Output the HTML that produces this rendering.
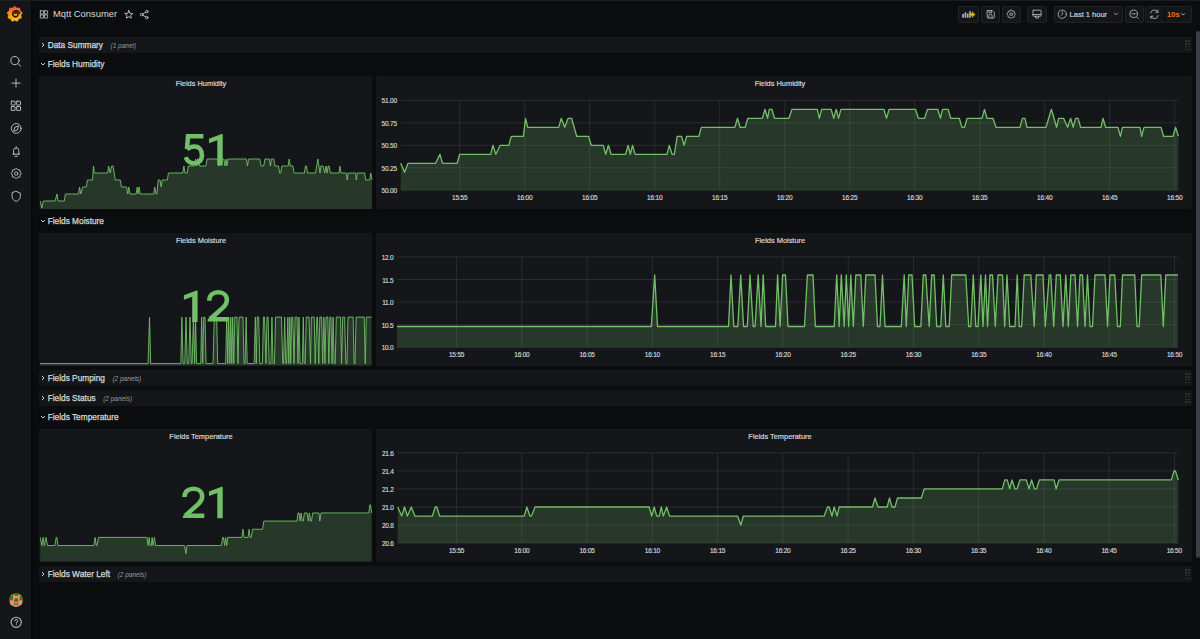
<!DOCTYPE html>
<html><head><meta charset="utf-8">
<style>
*{margin:0;padding:0;box-sizing:border-box}
html,body{width:1200px;height:639px;overflow:hidden;background:#0b0c0e;font-family:"Liberation Sans",sans-serif;position:relative}
.side{position:absolute;left:0;top:0;width:31.4px;height:639px;background:#141619}
.panel{position:absolute;background:#141619;border-radius:1.5px}
.rowbg{position:absolute;left:39px;width:1152.8px;height:16px;background:#141619;border-radius:1.5px}
.rtitle{position:absolute;left:47.7px;height:15.45px;line-height:15.45px;font-size:8.3px;font-weight:normal;-webkit-text-stroke:0.25px #d8d9da;color:#d8d9da;white-space:nowrap}
.rtitle .sub{font-size:6.5px;font-weight:normal;font-style:italic;color:#9a9ba0;margin-left:7.5px;-webkit-text-stroke:0}
.chev{position:absolute;left:39.9px}
.dot{position:absolute;width:1.5px;height:1.5px;background:#303236}
.drag{position:absolute;left:1185.5px;width:4.5px;height:9px;background-image:radial-gradient(circle,#3a3c40 0.8px,transparent 0.9px);background-size:2.8px 2.8px}
.ptitle{position:absolute;width:120px;text-align:center;font-size:8.1px;transform:scaleX(0.915);font-weight:normal;-webkit-text-stroke:0.2px #d8d9da;color:#d8d9da;line-height:9px;white-space:nowrap}
.yl{position:absolute;text-align:right;font-size:6.5px;letter-spacing:-0.2px;color:#d8d9da;-webkit-text-stroke:0.15px #d8d9da;line-height:9px;white-space:nowrap}
.xl{position:absolute;width:30px;text-align:center;font-size:6.5px;letter-spacing:-0.2px;color:#d8d9da;-webkit-text-stroke:0.15px #d8d9da;line-height:9px;white-space:nowrap}
.big{position:absolute;font-size:44px;color:#73bf69;font-weight:normal;-webkit-text-stroke:1.2px #73bf69;line-height:44px;white-space:nowrap}
svg.ov{position:absolute;left:0;top:0}
.btn{position:absolute;top:6px;height:16.8px;background:#141619;border:0.6px solid #202226;border-radius:2px}
</style></head><body>
<div class="side"></div><div style="position:absolute;left:31.4px;top:0;width:3px;height:639px;background:linear-gradient(90deg,#060708,rgba(11,12,14,0))"></div>
<div class="rowbg" style="top:36.8px"></div>
<div class="dot" style="left:1185.4px;top:40.2px"></div>
<div class="dot" style="left:1185.4px;top:43.0px"></div>
<div class="dot" style="left:1185.4px;top:45.7px"></div>
<div class="dot" style="left:1185.4px;top:48.5px"></div>
<div class="dot" style="left:1188.2px;top:40.2px"></div>
<div class="dot" style="left:1188.2px;top:43.0px"></div>
<div class="dot" style="left:1188.2px;top:45.7px"></div>
<div class="dot" style="left:1188.2px;top:48.5px"></div>
<svg class="chev" style="top:40.7px" width="6" height="8" viewBox="0 0 6 8"><path d="M2 2 L4 4 L2 6" fill="none" stroke="#c7d0d9" stroke-width="1"/></svg>
<div class="rtitle" style="top:37.7px">Data Summary<span class="sub">(1 panel)</span></div>
<svg class="chev" style="top:60.3px" width="6" height="8" viewBox="0 0 6 8"><path d="M1 3 L3 5 L5 3" fill="none" stroke="#c7d0d9" stroke-width="1"/></svg>
<div class="rtitle" style="top:57.3px">Fields Humidity</div>
<svg class="chev" style="top:217.1px" width="6" height="8" viewBox="0 0 6 8"><path d="M1 3 L3 5 L5 3" fill="none" stroke="#c7d0d9" stroke-width="1"/></svg>
<div class="rtitle" style="top:214.1px">Fields Moisture</div>
<div class="rowbg" style="top:370.0px"></div>
<div class="dot" style="left:1185.4px;top:373.4px"></div>
<div class="dot" style="left:1185.4px;top:376.2px"></div>
<div class="dot" style="left:1185.4px;top:378.9px"></div>
<div class="dot" style="left:1185.4px;top:381.7px"></div>
<div class="dot" style="left:1188.2px;top:373.4px"></div>
<div class="dot" style="left:1188.2px;top:376.2px"></div>
<div class="dot" style="left:1188.2px;top:378.9px"></div>
<div class="dot" style="left:1188.2px;top:381.7px"></div>
<svg class="chev" style="top:373.9px" width="6" height="8" viewBox="0 0 6 8"><path d="M2 2 L4 4 L2 6" fill="none" stroke="#c7d0d9" stroke-width="1"/></svg>
<div class="rtitle" style="top:370.9px">Fields Pumping<span class="sub">(2 panels)</span></div>
<div class="rowbg" style="top:389.6px"></div>
<div class="dot" style="left:1185.4px;top:393.0px"></div>
<div class="dot" style="left:1185.4px;top:395.8px"></div>
<div class="dot" style="left:1185.4px;top:398.5px"></div>
<div class="dot" style="left:1185.4px;top:401.2px"></div>
<div class="dot" style="left:1188.2px;top:393.0px"></div>
<div class="dot" style="left:1188.2px;top:395.8px"></div>
<div class="dot" style="left:1188.2px;top:398.5px"></div>
<div class="dot" style="left:1188.2px;top:401.2px"></div>
<svg class="chev" style="top:393.5px" width="6" height="8" viewBox="0 0 6 8"><path d="M2 2 L4 4 L2 6" fill="none" stroke="#c7d0d9" stroke-width="1"/></svg>
<div class="rtitle" style="top:390.5px">Fields Status<span class="sub">(2 panels)</span></div>
<svg class="chev" style="top:413.1px" width="6" height="8" viewBox="0 0 6 8"><path d="M1 3 L3 5 L5 3" fill="none" stroke="#c7d0d9" stroke-width="1"/></svg>
<div class="rtitle" style="top:410.1px">Fields Temperature</div>
<div class="rowbg" style="top:566.0px"></div>
<div class="dot" style="left:1185.4px;top:569.4px"></div>
<div class="dot" style="left:1185.4px;top:572.2px"></div>
<div class="dot" style="left:1185.4px;top:574.9px"></div>
<div class="dot" style="left:1185.4px;top:577.7px"></div>
<div class="dot" style="left:1188.2px;top:569.4px"></div>
<div class="dot" style="left:1188.2px;top:572.2px"></div>
<div class="dot" style="left:1188.2px;top:574.9px"></div>
<div class="dot" style="left:1188.2px;top:577.7px"></div>
<svg class="chev" style="top:569.9px" width="6" height="8" viewBox="0 0 6 8"><path d="M2 2 L4 4 L2 6" fill="none" stroke="#c7d0d9" stroke-width="1"/></svg>
<div class="rtitle" style="top:566.9px">Fields Water Left<span class="sub">(2 panels)</span></div>
<div class="panel" style="left:39.0px;top:76.2px;width:333.3px;height:132.8px"></div>
<div class="panel" style="left:376.4px;top:76.2px;width:815.4px;height:132.8px"></div>
<div class="panel" style="left:39.0px;top:233.0px;width:333.3px;height:132.8px"></div>
<div class="panel" style="left:376.4px;top:233.0px;width:815.4px;height:132.8px"></div>
<div class="panel" style="left:39.0px;top:429.0px;width:333.3px;height:132.8px"></div>
<div class="panel" style="left:376.4px;top:429.0px;width:815.4px;height:132.8px"></div>
<div class="yl" style="left:366.9px;width:30.0px;top:186.3px">50.00</div>
<div class="yl" style="left:366.9px;width:30.0px;top:163.8px">50.25</div>
<div class="yl" style="left:366.9px;width:30.0px;top:141.3px">50.50</div>
<div class="yl" style="left:366.9px;width:30.0px;top:118.8px">50.75</div>
<div class="yl" style="left:366.9px;width:30.0px;top:96.3px">51.00</div>
<div class="xl" style="left:444.7px;top:192.9px">15:55</div>
<div class="xl" style="left:509.7px;top:192.9px">16:00</div>
<div class="xl" style="left:574.7px;top:192.9px">16:05</div>
<div class="xl" style="left:639.7px;top:192.9px">16:10</div>
<div class="xl" style="left:704.7px;top:192.9px">16:15</div>
<div class="xl" style="left:769.7px;top:192.9px">16:20</div>
<div class="xl" style="left:834.7px;top:192.9px">16:25</div>
<div class="xl" style="left:899.7px;top:192.9px">16:30</div>
<div class="xl" style="left:964.7px;top:192.9px">16:35</div>
<div class="xl" style="left:1029.7px;top:192.9px">16:40</div>
<div class="xl" style="left:1094.7px;top:192.9px">16:45</div>
<div class="xl" style="left:1159.7px;top:192.9px">16:50</div>
<div class="yl" style="left:363.5px;width:30.0px;top:343.3px">10.0</div>
<div class="yl" style="left:363.5px;width:30.0px;top:320.7px">10.5</div>
<div class="yl" style="left:363.5px;width:30.0px;top:298.1px">11.0</div>
<div class="yl" style="left:363.5px;width:30.0px;top:275.5px">11.5</div>
<div class="yl" style="left:363.5px;width:30.0px;top:252.9px">12.0</div>
<div class="xl" style="left:441.6px;top:349.9px">15:55</div>
<div class="xl" style="left:506.9px;top:349.9px">16:00</div>
<div class="xl" style="left:572.1px;top:349.9px">16:05</div>
<div class="xl" style="left:637.4px;top:349.9px">16:10</div>
<div class="xl" style="left:702.7px;top:349.9px">16:15</div>
<div class="xl" style="left:768.0px;top:349.9px">16:20</div>
<div class="xl" style="left:833.2px;top:349.9px">16:25</div>
<div class="xl" style="left:898.5px;top:349.9px">16:30</div>
<div class="xl" style="left:963.8px;top:349.9px">16:35</div>
<div class="xl" style="left:1029.0px;top:349.9px">16:40</div>
<div class="xl" style="left:1094.3px;top:349.9px">16:45</div>
<div class="xl" style="left:1159.6px;top:349.9px">16:50</div>
<div class="yl" style="left:363.8px;width:30.0px;top:539.1px">20.6</div>
<div class="yl" style="left:363.8px;width:30.0px;top:521.1px">20.8</div>
<div class="yl" style="left:363.8px;width:30.0px;top:503.0px">21.0</div>
<div class="yl" style="left:363.8px;width:30.0px;top:485.0px">21.2</div>
<div class="yl" style="left:363.8px;width:30.0px;top:466.9px">21.4</div>
<div class="yl" style="left:363.8px;width:30.0px;top:448.9px">21.6</div>
<div class="xl" style="left:441.6px;top:546.0px">15:55</div>
<div class="xl" style="left:506.9px;top:546.0px">16:00</div>
<div class="xl" style="left:572.1px;top:546.0px">16:05</div>
<div class="xl" style="left:637.4px;top:546.0px">16:10</div>
<div class="xl" style="left:702.6px;top:546.0px">16:15</div>
<div class="xl" style="left:767.9px;top:546.0px">16:20</div>
<div class="xl" style="left:833.1px;top:546.0px">16:25</div>
<div class="xl" style="left:898.4px;top:546.0px">16:30</div>
<div class="xl" style="left:963.6px;top:546.0px">16:35</div>
<div class="xl" style="left:1028.8px;top:546.0px">16:40</div>
<div class="xl" style="left:1094.1px;top:546.0px">16:45</div>
<div class="xl" style="left:1159.3px;top:546.0px">16:50</div>
<div class="ptitle" style="left:141.1px;top:79.2px">Fields Humidity</div>
<div class="ptitle" style="left:719.5px;top:79.2px">Fields Humidity</div>
<div class="ptitle" style="left:141.1px;top:236.0px">Fields Moisture</div>
<div class="ptitle" style="left:719.5px;top:236.0px">Fields Moisture</div>
<div class="ptitle" style="left:141.1px;top:432.0px">Fields Temperature</div>
<div class="ptitle" style="left:719.5px;top:432.0px">Fields Temperature</div>
<svg class="ov" width="1200" height="639" viewBox="0 0 1200 639"><line x1="400.7" y1="190.30" x2="1178.4" y2="190.30" stroke="rgba(255,255,255,0.09)" stroke-width="1"/>
<line x1="400.7" y1="167.80" x2="1178.4" y2="167.80" stroke="rgba(255,255,255,0.09)" stroke-width="1"/>
<line x1="400.7" y1="145.30" x2="1178.4" y2="145.30" stroke="rgba(255,255,255,0.09)" stroke-width="1"/>
<line x1="400.7" y1="122.80" x2="1178.4" y2="122.80" stroke="rgba(255,255,255,0.09)" stroke-width="1"/>
<line x1="400.7" y1="100.30" x2="1178.4" y2="100.30" stroke="rgba(255,255,255,0.09)" stroke-width="1"/>
<line x1="459.70" y1="100.3" x2="459.70" y2="190.3" stroke="rgba(255,255,255,0.09)" stroke-width="1"/>
<line x1="524.70" y1="100.3" x2="524.70" y2="190.3" stroke="rgba(255,255,255,0.09)" stroke-width="1"/>
<line x1="589.70" y1="100.3" x2="589.70" y2="190.3" stroke="rgba(255,255,255,0.09)" stroke-width="1"/>
<line x1="654.70" y1="100.3" x2="654.70" y2="190.3" stroke="rgba(255,255,255,0.09)" stroke-width="1"/>
<line x1="719.70" y1="100.3" x2="719.70" y2="190.3" stroke="rgba(255,255,255,0.09)" stroke-width="1"/>
<line x1="784.70" y1="100.3" x2="784.70" y2="190.3" stroke="rgba(255,255,255,0.09)" stroke-width="1"/>
<line x1="849.70" y1="100.3" x2="849.70" y2="190.3" stroke="rgba(255,255,255,0.09)" stroke-width="1"/>
<line x1="914.70" y1="100.3" x2="914.70" y2="190.3" stroke="rgba(255,255,255,0.09)" stroke-width="1"/>
<line x1="979.70" y1="100.3" x2="979.70" y2="190.3" stroke="rgba(255,255,255,0.09)" stroke-width="1"/>
<line x1="1044.70" y1="100.3" x2="1044.70" y2="190.3" stroke="rgba(255,255,255,0.09)" stroke-width="1"/>
<line x1="1109.70" y1="100.3" x2="1109.70" y2="190.3" stroke="rgba(255,255,255,0.09)" stroke-width="1"/>
<line x1="1174.70" y1="100.3" x2="1174.70" y2="190.3" stroke="rgba(255,255,255,0.09)" stroke-width="1"/>
<polygon points="400.70,190.30 400.70,163.30 404.60,172.30 408.00,163.30 435.60,163.30 440.00,154.30 442.50,163.30 457.10,163.30 459.70,154.30 490.70,154.30 492.90,145.30 495.80,154.30 500.20,145.30 508.80,145.30 511.30,136.30 523.40,136.30 525.50,118.30 527.70,127.30 558.70,127.30 561.20,118.30 564.70,127.30 568.10,118.30 571.60,118.30 576.70,136.30 588.60,136.30 591.20,145.30 603.20,145.30 605.80,154.30 608.40,145.30 611.00,154.30 625.60,154.30 628.20,145.30 630.30,154.30 632.50,145.30 635.10,154.30 666.90,154.30 669.20,145.30 672.10,154.30 674.30,154.30 677.20,136.30 681.50,136.30 684.10,145.30 686.70,136.30 698.80,136.30 701.30,127.30 734.90,127.30 737.50,118.30 740.10,127.30 745.20,127.30 747.80,118.30 762.40,118.30 765.00,109.30 767.60,118.30 769.30,109.30 771.90,109.30 774.50,118.30 788.90,118.30 792.00,109.30 817.30,109.30 819.40,118.30 821.60,109.30 831.10,109.30 833.70,118.30 836.30,109.30 838.50,118.30 840.90,109.30 883.90,109.30 886.50,118.30 889.10,109.30 915.40,109.30 918.40,118.30 924.60,118.30 927.50,109.30 937.80,109.30 940.40,118.30 942.60,109.30 948.10,109.30 950.70,118.30 959.30,118.30 961.90,127.30 964.50,127.30 967.10,118.30 982.00,118.30 984.40,109.30 987.00,118.30 993.00,118.30 996.00,127.30 1020.00,127.30 1022.40,118.30 1025.00,118.30 1027.00,127.30 1046.00,127.30 1051.40,109.30 1056.60,127.30 1058.60,118.30 1063.60,118.30 1067.60,127.30 1070.60,118.30 1073.20,127.30 1075.60,118.30 1078.00,118.30 1080.60,127.30 1101.00,127.30 1103.00,118.30 1105.60,127.30 1118.00,127.30 1120.40,136.30 1122.40,127.30 1140.00,127.30 1141.60,136.30 1144.00,127.30 1161.00,127.30 1163.60,136.30 1173.00,136.30 1175.60,127.30 1178.40,136.30 1178.40,190.30" fill="rgba(115,191,105,0.2)"/>
<polyline points="400.70,163.30 404.60,172.30 408.00,163.30 435.60,163.30 440.00,154.30 442.50,163.30 457.10,163.30 459.70,154.30 490.70,154.30 492.90,145.30 495.80,154.30 500.20,145.30 508.80,145.30 511.30,136.30 523.40,136.30 525.50,118.30 527.70,127.30 558.70,127.30 561.20,118.30 564.70,127.30 568.10,118.30 571.60,118.30 576.70,136.30 588.60,136.30 591.20,145.30 603.20,145.30 605.80,154.30 608.40,145.30 611.00,154.30 625.60,154.30 628.20,145.30 630.30,154.30 632.50,145.30 635.10,154.30 666.90,154.30 669.20,145.30 672.10,154.30 674.30,154.30 677.20,136.30 681.50,136.30 684.10,145.30 686.70,136.30 698.80,136.30 701.30,127.30 734.90,127.30 737.50,118.30 740.10,127.30 745.20,127.30 747.80,118.30 762.40,118.30 765.00,109.30 767.60,118.30 769.30,109.30 771.90,109.30 774.50,118.30 788.90,118.30 792.00,109.30 817.30,109.30 819.40,118.30 821.60,109.30 831.10,109.30 833.70,118.30 836.30,109.30 838.50,118.30 840.90,109.30 883.90,109.30 886.50,118.30 889.10,109.30 915.40,109.30 918.40,118.30 924.60,118.30 927.50,109.30 937.80,109.30 940.40,118.30 942.60,109.30 948.10,109.30 950.70,118.30 959.30,118.30 961.90,127.30 964.50,127.30 967.10,118.30 982.00,118.30 984.40,109.30 987.00,118.30 993.00,118.30 996.00,127.30 1020.00,127.30 1022.40,118.30 1025.00,118.30 1027.00,127.30 1046.00,127.30 1051.40,109.30 1056.60,127.30 1058.60,118.30 1063.60,118.30 1067.60,127.30 1070.60,118.30 1073.20,127.30 1075.60,118.30 1078.00,118.30 1080.60,127.30 1101.00,127.30 1103.00,118.30 1105.60,127.30 1118.00,127.30 1120.40,136.30 1122.40,127.30 1140.00,127.30 1141.60,136.30 1144.00,127.30 1161.00,127.30 1163.60,136.30 1173.00,136.30 1175.60,127.30 1178.40,136.30" fill="none" stroke="#73bf69" stroke-width="1.3" stroke-linejoin="round"/>
<polygon points="40.20,209.00 40.20,201.00 41.86,208.00 43.31,201.00 55.09,201.00 56.97,194.00 58.03,201.00 64.26,201.00 65.37,194.00 78.60,194.00 79.54,187.00 80.77,194.00 82.65,187.00 86.32,187.00 87.39,180.00 92.55,180.00 93.45,166.00 94.38,173.00 107.61,173.00 108.68,166.00 110.17,173.00 111.62,166.00 113.11,166.00 115.29,180.00 120.37,180.00 121.48,187.00 126.60,187.00 127.70,194.00 128.81,187.00 129.92,194.00 136.15,194.00 137.26,187.00 138.16,194.00 139.10,187.00 140.21,194.00 153.77,194.00 154.75,187.00 155.99,194.00 156.93,194.00 158.17,180.00 160.00,180.00 161.11,187.00 162.22,180.00 167.38,180.00 168.45,173.00 182.78,173.00 183.89,166.00 185.00,173.00 187.18,173.00 188.29,166.00 194.52,166.00 195.63,159.00 196.74,166.00 197.46,159.00 198.57,159.00 199.68,166.00 205.82,166.00 207.15,159.00 217.94,159.00 218.84,166.00 219.77,159.00 223.83,159.00 224.94,166.00 226.05,159.00 226.98,166.00 228.01,159.00 246.35,159.00 247.46,166.00 248.57,159.00 259.79,159.00 261.07,166.00 263.72,166.00 264.96,159.00 269.35,159.00 270.46,166.00 271.40,159.00 273.74,159.00 274.85,166.00 278.52,166.00 279.63,173.00 280.74,173.00 281.85,166.00 288.21,166.00 289.23,159.00 290.34,166.00 292.90,166.00 294.18,173.00 304.42,173.00 305.44,166.00 306.55,166.00 307.41,173.00 315.51,173.00 317.82,159.00 320.03,173.00 320.89,166.00 323.02,166.00 324.73,173.00 326.01,166.00 327.12,173.00 328.14,166.00 329.17,166.00 330.27,173.00 338.98,173.00 339.83,166.00 340.94,173.00 346.23,173.00 347.25,180.00 348.11,173.00 355.62,173.00 356.30,180.00 357.32,173.00 364.58,173.00 365.69,180.00 369.70,180.00 370.81,173.00 372.00,180.00 372.00,209.00" fill="rgba(115,191,105,0.2)"/>
<polyline points="40.20,201.00 41.86,208.00 43.31,201.00 55.09,201.00 56.97,194.00 58.03,201.00 64.26,201.00 65.37,194.00 78.60,194.00 79.54,187.00 80.77,194.00 82.65,187.00 86.32,187.00 87.39,180.00 92.55,180.00 93.45,166.00 94.38,173.00 107.61,173.00 108.68,166.00 110.17,173.00 111.62,166.00 113.11,166.00 115.29,180.00 120.37,180.00 121.48,187.00 126.60,187.00 127.70,194.00 128.81,187.00 129.92,194.00 136.15,194.00 137.26,187.00 138.16,194.00 139.10,187.00 140.21,194.00 153.77,194.00 154.75,187.00 155.99,194.00 156.93,194.00 158.17,180.00 160.00,180.00 161.11,187.00 162.22,180.00 167.38,180.00 168.45,173.00 182.78,173.00 183.89,166.00 185.00,173.00 187.18,173.00 188.29,166.00 194.52,166.00 195.63,159.00 196.74,166.00 197.46,159.00 198.57,159.00 199.68,166.00 205.82,166.00 207.15,159.00 217.94,159.00 218.84,166.00 219.77,159.00 223.83,159.00 224.94,166.00 226.05,159.00 226.98,166.00 228.01,159.00 246.35,159.00 247.46,166.00 248.57,159.00 259.79,159.00 261.07,166.00 263.72,166.00 264.96,159.00 269.35,159.00 270.46,166.00 271.40,159.00 273.74,159.00 274.85,166.00 278.52,166.00 279.63,173.00 280.74,173.00 281.85,166.00 288.21,166.00 289.23,159.00 290.34,166.00 292.90,166.00 294.18,173.00 304.42,173.00 305.44,166.00 306.55,166.00 307.41,173.00 315.51,173.00 317.82,159.00 320.03,173.00 320.89,166.00 323.02,166.00 324.73,173.00 326.01,166.00 327.12,173.00 328.14,166.00 329.17,166.00 330.27,173.00 338.98,173.00 339.83,166.00 340.94,173.00 346.23,173.00 347.25,180.00 348.11,173.00 355.62,173.00 356.30,180.00 357.32,173.00 364.58,173.00 365.69,180.00 369.70,180.00 370.81,173.00 372.00,180.00" fill="none" stroke="#73bf69" stroke-width="0.9" stroke-linejoin="round"/>
<line x1="397.0" y1="347.30" x2="1178.0" y2="347.30" stroke="rgba(255,255,255,0.09)" stroke-width="1"/>
<line x1="397.0" y1="324.70" x2="1178.0" y2="324.70" stroke="rgba(255,255,255,0.09)" stroke-width="1"/>
<line x1="397.0" y1="302.10" x2="1178.0" y2="302.10" stroke="rgba(255,255,255,0.09)" stroke-width="1"/>
<line x1="397.0" y1="279.50" x2="1178.0" y2="279.50" stroke="rgba(255,255,255,0.09)" stroke-width="1"/>
<line x1="397.0" y1="256.90" x2="1178.0" y2="256.90" stroke="rgba(255,255,255,0.09)" stroke-width="1"/>
<line x1="456.60" y1="256.9" x2="456.60" y2="347.3" stroke="rgba(255,255,255,0.09)" stroke-width="1"/>
<line x1="521.87" y1="256.9" x2="521.87" y2="347.3" stroke="rgba(255,255,255,0.09)" stroke-width="1"/>
<line x1="587.14" y1="256.9" x2="587.14" y2="347.3" stroke="rgba(255,255,255,0.09)" stroke-width="1"/>
<line x1="652.41" y1="256.9" x2="652.41" y2="347.3" stroke="rgba(255,255,255,0.09)" stroke-width="1"/>
<line x1="717.68" y1="256.9" x2="717.68" y2="347.3" stroke="rgba(255,255,255,0.09)" stroke-width="1"/>
<line x1="782.95" y1="256.9" x2="782.95" y2="347.3" stroke="rgba(255,255,255,0.09)" stroke-width="1"/>
<line x1="848.22" y1="256.9" x2="848.22" y2="347.3" stroke="rgba(255,255,255,0.09)" stroke-width="1"/>
<line x1="913.49" y1="256.9" x2="913.49" y2="347.3" stroke="rgba(255,255,255,0.09)" stroke-width="1"/>
<line x1="978.76" y1="256.9" x2="978.76" y2="347.3" stroke="rgba(255,255,255,0.09)" stroke-width="1"/>
<line x1="1044.03" y1="256.9" x2="1044.03" y2="347.3" stroke="rgba(255,255,255,0.09)" stroke-width="1"/>
<line x1="1109.30" y1="256.9" x2="1109.30" y2="347.3" stroke="rgba(255,255,255,0.09)" stroke-width="1"/>
<line x1="1174.57" y1="256.9" x2="1174.57" y2="347.3" stroke="rgba(255,255,255,0.09)" stroke-width="1"/>
<polygon points="397.00,347.30 397.00,326.51 651.30,326.51 654.70,274.98 657.50,326.51 728.50,326.51 731.00,274.98 733.80,326.51 737.80,326.51 740.70,274.98 743.60,326.51 747.30,326.51 750.00,274.98 753.20,326.51 755.10,326.51 758.20,274.98 761.00,326.51 763.20,274.98 765.70,326.51 775.50,326.51 777.60,274.98 780.10,326.51 782.60,274.98 785.50,274.98 788.00,326.51 804.50,326.51 807.40,274.98 813.00,274.98 815.40,326.51 834.20,326.51 836.70,274.98 839.20,326.51 841.30,274.98 844.20,326.51 846.30,274.98 848.70,326.51 850.80,274.98 853.30,326.51 855.80,274.98 860.80,274.98 863.30,326.51 865.80,274.98 875.00,274.98 877.50,326.51 880.00,326.51 882.50,274.98 885.00,326.51 901.30,326.51 904.20,274.98 906.30,326.51 908.70,274.98 912.00,274.98 914.70,326.51 920.80,326.51 923.30,274.98 925.80,274.98 929.20,326.51 931.70,274.98 934.20,274.98 936.70,326.51 940.80,326.51 943.30,274.98 945.80,326.51 949.20,326.51 951.70,274.98 965.80,274.98 968.70,326.51 970.80,326.51 973.30,274.98 975.80,326.51 978.00,326.51 980.80,274.98 983.00,326.51 985.50,274.98 987.50,326.51 990.00,274.98 992.50,274.98 995.30,326.51 998.00,274.98 1002.50,274.98 1004.70,326.51 1007.00,274.98 1009.70,326.51 1015.00,326.51 1017.20,274.98 1019.20,326.51 1021.70,326.51 1024.20,274.98 1030.80,274.98 1034.20,326.51 1036.30,274.98 1043.00,274.98 1045.30,326.51 1049.20,274.98 1050.80,274.98 1053.70,326.51 1056.30,274.98 1060.30,274.98 1063.00,326.51 1065.80,274.98 1068.30,326.51 1070.80,274.98 1075.00,274.98 1077.50,326.51 1080.00,274.98 1082.50,274.98 1085.00,326.51 1087.50,274.98 1090.00,326.51 1092.50,326.51 1095.00,274.98 1105.00,274.98 1107.50,326.51 1110.00,274.98 1114.70,274.98 1117.50,326.51 1120.30,326.51 1122.50,274.98 1134.70,274.98 1137.00,326.51 1139.20,326.51 1141.70,274.98 1160.80,274.98 1163.30,326.51 1165.80,274.98 1178.00,274.98 1178.00,347.30" fill="rgba(115,191,105,0.2)"/>
<polyline points="397.00,326.51 651.30,326.51 654.70,274.98 657.50,326.51 728.50,326.51 731.00,274.98 733.80,326.51 737.80,326.51 740.70,274.98 743.60,326.51 747.30,326.51 750.00,274.98 753.20,326.51 755.10,326.51 758.20,274.98 761.00,326.51 763.20,274.98 765.70,326.51 775.50,326.51 777.60,274.98 780.10,326.51 782.60,274.98 785.50,274.98 788.00,326.51 804.50,326.51 807.40,274.98 813.00,274.98 815.40,326.51 834.20,326.51 836.70,274.98 839.20,326.51 841.30,274.98 844.20,326.51 846.30,274.98 848.70,326.51 850.80,274.98 853.30,326.51 855.80,274.98 860.80,274.98 863.30,326.51 865.80,274.98 875.00,274.98 877.50,326.51 880.00,326.51 882.50,274.98 885.00,326.51 901.30,326.51 904.20,274.98 906.30,326.51 908.70,274.98 912.00,274.98 914.70,326.51 920.80,326.51 923.30,274.98 925.80,274.98 929.20,326.51 931.70,274.98 934.20,274.98 936.70,326.51 940.80,326.51 943.30,274.98 945.80,326.51 949.20,326.51 951.70,274.98 965.80,274.98 968.70,326.51 970.80,326.51 973.30,274.98 975.80,326.51 978.00,326.51 980.80,274.98 983.00,326.51 985.50,274.98 987.50,326.51 990.00,274.98 992.50,274.98 995.30,326.51 998.00,274.98 1002.50,274.98 1004.70,326.51 1007.00,274.98 1009.70,326.51 1015.00,326.51 1017.20,274.98 1019.20,326.51 1021.70,326.51 1024.20,274.98 1030.80,274.98 1034.20,326.51 1036.30,274.98 1043.00,274.98 1045.30,326.51 1049.20,274.98 1050.80,274.98 1053.70,326.51 1056.30,274.98 1060.30,274.98 1063.00,326.51 1065.80,274.98 1068.30,326.51 1070.80,274.98 1075.00,274.98 1077.50,326.51 1080.00,274.98 1082.50,274.98 1085.00,326.51 1087.50,274.98 1090.00,326.51 1092.50,326.51 1095.00,274.98 1105.00,274.98 1107.50,326.51 1110.00,274.98 1114.70,274.98 1117.50,326.51 1120.30,326.51 1122.50,274.98 1134.70,274.98 1137.00,326.51 1139.20,326.51 1141.70,274.98 1160.80,274.98 1163.30,326.51 1165.80,274.98 1178.00,274.98" fill="none" stroke="#73bf69" stroke-width="1.3" stroke-linejoin="round"/>
<polygon points="40.20,365.60 40.20,363.60 148.07,363.60 149.52,317.10 150.70,363.60 180.82,363.60 181.88,317.10 183.07,363.60 184.77,363.60 186.00,317.10 187.23,363.60 188.80,363.60 189.94,317.10 191.30,363.60 192.11,363.60 193.42,317.10 194.61,363.60 195.54,317.10 196.60,363.60 200.76,363.60 201.65,317.10 202.71,363.60 203.77,317.10 205.00,317.10 206.06,363.60 213.06,363.60 214.29,317.10 216.67,317.10 217.69,363.60 225.66,363.60 226.72,317.10 227.78,363.60 228.67,317.10 229.90,363.60 230.79,317.10 231.81,363.60 232.70,317.10 233.76,363.60 234.82,317.10 236.94,317.10 238.00,363.60 239.06,317.10 242.97,317.10 244.03,363.60 245.09,363.60 246.15,317.10 247.21,363.60 254.12,363.60 255.35,317.10 256.24,363.60 257.26,317.10 258.66,317.10 259.81,363.60 262.40,363.60 263.46,317.10 264.52,317.10 265.96,363.60 267.02,317.10 268.08,317.10 269.14,363.60 270.88,363.60 271.94,317.10 273.00,363.60 274.44,363.60 275.50,317.10 281.48,317.10 282.71,363.60 283.61,363.60 284.67,317.10 285.73,363.60 286.66,363.60 287.85,317.10 288.78,363.60 289.84,317.10 290.69,363.60 291.75,317.10 292.81,317.10 294.00,363.60 295.14,317.10 297.05,317.10 297.99,363.60 298.96,317.10 300.11,363.60 302.36,363.60 303.29,317.10 304.14,363.60 305.20,363.60 306.26,317.10 309.06,317.10 310.50,363.60 311.39,317.10 314.23,317.10 315.21,363.60 316.86,317.10 317.54,317.10 318.77,363.60 319.87,317.10 321.57,317.10 322.72,363.60 323.90,317.10 324.97,363.60 326.03,317.10 327.81,317.10 328.87,363.60 329.93,317.10 330.99,317.10 332.05,363.60 333.11,317.10 334.17,363.60 335.23,363.60 336.29,317.10 340.53,317.10 341.59,363.60 342.65,317.10 344.65,317.10 345.84,363.60 347.02,363.60 347.96,317.10 353.13,317.10 354.11,363.60 355.04,363.60 356.10,317.10 364.20,317.10 365.26,363.60 366.32,317.10 371.50,317.10 371.50,365.60" fill="rgba(115,191,105,0.2)"/>
<polyline points="40.20,363.60 148.07,363.60 149.52,317.10 150.70,363.60 180.82,363.60 181.88,317.10 183.07,363.60 184.77,363.60 186.00,317.10 187.23,363.60 188.80,363.60 189.94,317.10 191.30,363.60 192.11,363.60 193.42,317.10 194.61,363.60 195.54,317.10 196.60,363.60 200.76,363.60 201.65,317.10 202.71,363.60 203.77,317.10 205.00,317.10 206.06,363.60 213.06,363.60 214.29,317.10 216.67,317.10 217.69,363.60 225.66,363.60 226.72,317.10 227.78,363.60 228.67,317.10 229.90,363.60 230.79,317.10 231.81,363.60 232.70,317.10 233.76,363.60 234.82,317.10 236.94,317.10 238.00,363.60 239.06,317.10 242.97,317.10 244.03,363.60 245.09,363.60 246.15,317.10 247.21,363.60 254.12,363.60 255.35,317.10 256.24,363.60 257.26,317.10 258.66,317.10 259.81,363.60 262.40,363.60 263.46,317.10 264.52,317.10 265.96,363.60 267.02,317.10 268.08,317.10 269.14,363.60 270.88,363.60 271.94,317.10 273.00,363.60 274.44,363.60 275.50,317.10 281.48,317.10 282.71,363.60 283.61,363.60 284.67,317.10 285.73,363.60 286.66,363.60 287.85,317.10 288.78,363.60 289.84,317.10 290.69,363.60 291.75,317.10 292.81,317.10 294.00,363.60 295.14,317.10 297.05,317.10 297.99,363.60 298.96,317.10 300.11,363.60 302.36,363.60 303.29,317.10 304.14,363.60 305.20,363.60 306.26,317.10 309.06,317.10 310.50,363.60 311.39,317.10 314.23,317.10 315.21,363.60 316.86,317.10 317.54,317.10 318.77,363.60 319.87,317.10 321.57,317.10 322.72,363.60 323.90,317.10 324.97,363.60 326.03,317.10 327.81,317.10 328.87,363.60 329.93,317.10 330.99,317.10 332.05,363.60 333.11,317.10 334.17,363.60 335.23,363.60 336.29,317.10 340.53,317.10 341.59,363.60 342.65,317.10 344.65,317.10 345.84,363.60 347.02,363.60 347.96,317.10 353.13,317.10 354.11,363.60 355.04,363.60 356.10,317.10 364.20,317.10 365.26,363.60 366.32,317.10 371.50,317.10" fill="none" stroke="#73bf69" stroke-width="0.9" stroke-linejoin="round"/>
<line x1="397.7" y1="543.10" x2="1178.3" y2="543.10" stroke="rgba(255,255,255,0.09)" stroke-width="1"/>
<line x1="397.7" y1="525.05" x2="1178.3" y2="525.05" stroke="rgba(255,255,255,0.09)" stroke-width="1"/>
<line x1="397.7" y1="507.00" x2="1178.3" y2="507.00" stroke="rgba(255,255,255,0.09)" stroke-width="1"/>
<line x1="397.7" y1="488.95" x2="1178.3" y2="488.95" stroke="rgba(255,255,255,0.09)" stroke-width="1"/>
<line x1="397.7" y1="470.90" x2="1178.3" y2="470.90" stroke="rgba(255,255,255,0.09)" stroke-width="1"/>
<line x1="397.7" y1="452.85" x2="1178.3" y2="452.85" stroke="rgba(255,255,255,0.09)" stroke-width="1"/>
<line x1="456.60" y1="452.9" x2="456.60" y2="543.1" stroke="rgba(255,255,255,0.09)" stroke-width="1"/>
<line x1="521.85" y1="452.9" x2="521.85" y2="543.1" stroke="rgba(255,255,255,0.09)" stroke-width="1"/>
<line x1="587.10" y1="452.9" x2="587.10" y2="543.1" stroke="rgba(255,255,255,0.09)" stroke-width="1"/>
<line x1="652.35" y1="452.9" x2="652.35" y2="543.1" stroke="rgba(255,255,255,0.09)" stroke-width="1"/>
<line x1="717.60" y1="452.9" x2="717.60" y2="543.1" stroke="rgba(255,255,255,0.09)" stroke-width="1"/>
<line x1="782.85" y1="452.9" x2="782.85" y2="543.1" stroke="rgba(255,255,255,0.09)" stroke-width="1"/>
<line x1="848.10" y1="452.9" x2="848.10" y2="543.1" stroke="rgba(255,255,255,0.09)" stroke-width="1"/>
<line x1="913.35" y1="452.9" x2="913.35" y2="543.1" stroke="rgba(255,255,255,0.09)" stroke-width="1"/>
<line x1="978.60" y1="452.9" x2="978.60" y2="543.1" stroke="rgba(255,255,255,0.09)" stroke-width="1"/>
<line x1="1043.85" y1="452.9" x2="1043.85" y2="543.1" stroke="rgba(255,255,255,0.09)" stroke-width="1"/>
<line x1="1109.10" y1="452.9" x2="1109.10" y2="543.1" stroke="rgba(255,255,255,0.09)" stroke-width="1"/>
<line x1="1174.35" y1="452.9" x2="1174.35" y2="543.1" stroke="rgba(255,255,255,0.09)" stroke-width="1"/>
<polygon points="397.70,543.10 397.70,507.00 401.70,516.03 404.50,507.00 407.40,516.03 411.30,507.00 414.90,516.03 432.40,516.03 435.30,507.00 436.90,507.00 439.60,516.03 524.20,516.03 526.90,507.00 529.90,516.03 531.40,516.03 535.10,507.00 649.20,507.00 651.70,516.03 654.20,507.00 656.70,516.03 659.20,516.03 661.30,507.00 663.30,516.03 666.70,507.00 669.50,516.03 737.50,516.03 740.80,525.05 743.30,516.03 824.20,516.03 827.50,507.00 829.20,507.00 832.00,516.03 834.20,507.00 837.00,516.03 839.20,507.00 872.50,507.00 875.00,497.98 878.00,507.00 887.20,507.00 889.50,497.98 892.00,507.00 895.00,507.00 897.50,497.98 921.30,497.98 924.20,488.95 1002.30,488.95 1004.80,479.93 1007.20,479.93 1009.70,488.95 1012.00,479.93 1015.00,488.95 1017.00,488.95 1019.90,479.93 1026.30,479.93 1029.10,488.95 1031.60,479.93 1034.50,488.95 1036.50,488.95 1039.40,479.93 1054.10,479.93 1056.10,488.95 1059.00,479.93 1171.40,479.93 1174.00,470.90 1175.40,470.90 1178.30,479.93 1178.30,543.10" fill="rgba(115,191,105,0.2)"/>
<polyline points="397.70,507.00 401.70,516.03 404.50,507.00 407.40,516.03 411.30,507.00 414.90,516.03 432.40,516.03 435.30,507.00 436.90,507.00 439.60,516.03 524.20,516.03 526.90,507.00 529.90,516.03 531.40,516.03 535.10,507.00 649.20,507.00 651.70,516.03 654.20,507.00 656.70,516.03 659.20,516.03 661.30,507.00 663.30,516.03 666.70,507.00 669.50,516.03 737.50,516.03 740.80,525.05 743.30,516.03 824.20,516.03 827.50,507.00 829.20,507.00 832.00,516.03 834.20,507.00 837.00,516.03 839.20,507.00 872.50,507.00 875.00,497.98 878.00,507.00 887.20,507.00 889.50,497.98 892.00,507.00 895.00,507.00 897.50,497.98 921.30,497.98 924.20,488.95 1002.30,488.95 1004.80,479.93 1007.20,479.93 1009.70,488.95 1012.00,479.93 1015.00,488.95 1017.00,488.95 1019.90,479.93 1026.30,479.93 1029.10,488.95 1031.60,479.93 1034.50,488.95 1036.50,488.95 1039.40,479.93 1054.10,479.93 1056.10,488.95 1059.00,479.93 1171.40,479.93 1174.00,470.90 1175.40,470.90 1178.30,479.93" fill="none" stroke="#73bf69" stroke-width="1.3" stroke-linejoin="round"/>
<polygon points="40.20,561.40 40.20,537.40 41.90,545.55 43.09,537.40 44.32,545.55 45.98,537.40 47.50,545.55 54.94,545.55 56.17,537.40 56.85,537.40 57.99,545.55 93.92,545.55 95.07,537.40 96.34,545.55 96.98,545.55 98.55,537.40 147.01,537.40 148.07,545.55 149.13,537.40 150.19,545.55 151.25,545.55 152.14,537.40 152.99,545.55 154.44,537.40 155.63,545.55 184.50,545.55 185.91,553.70 186.97,545.55 221.32,545.55 222.72,537.40 223.45,537.40 224.64,545.55 225.57,537.40 226.76,545.55 227.69,537.40 241.83,537.40 242.90,529.25 244.17,537.40 248.08,537.40 249.05,529.25 250.12,537.40 251.39,537.40 252.45,529.25 262.56,529.25 263.79,521.10 296.96,521.10 298.02,512.95 299.04,512.95 300.10,521.10 301.08,512.95 302.35,521.10 303.20,521.10 304.43,512.95 307.15,512.95 308.34,521.10 309.40,512.95 310.63,521.10 311.48,521.10 312.71,512.95 318.96,512.95 319.80,521.10 321.04,512.95 368.77,512.95 369.87,504.80 370.47,504.80 371.70,512.95 371.70,561.40" fill="rgba(115,191,105,0.2)"/>
<polyline points="40.20,537.40 41.90,545.55 43.09,537.40 44.32,545.55 45.98,537.40 47.50,545.55 54.94,545.55 56.17,537.40 56.85,537.40 57.99,545.55 93.92,545.55 95.07,537.40 96.34,545.55 96.98,545.55 98.55,537.40 147.01,537.40 148.07,545.55 149.13,537.40 150.19,545.55 151.25,545.55 152.14,537.40 152.99,545.55 154.44,537.40 155.63,545.55 184.50,545.55 185.91,553.70 186.97,545.55 221.32,545.55 222.72,537.40 223.45,537.40 224.64,545.55 225.57,537.40 226.76,545.55 227.69,537.40 241.83,537.40 242.90,529.25 244.17,537.40 248.08,537.40 249.05,529.25 250.12,537.40 251.39,537.40 252.45,529.25 262.56,529.25 263.79,521.10 296.96,521.10 298.02,512.95 299.04,512.95 300.10,521.10 301.08,512.95 302.35,521.10 303.20,521.10 304.43,512.95 307.15,512.95 308.34,521.10 309.40,512.95 310.63,521.10 311.48,521.10 312.71,512.95 318.96,512.95 319.80,521.10 321.04,512.95 368.77,512.95 369.87,504.80 370.47,504.80 371.70,512.95" fill="none" stroke="#73bf69" stroke-width="0.9" stroke-linejoin="round"/></svg>
<svg style="position:absolute;left:0;top:0" width="1200" height="639" viewBox="0 0 1200 639"><g transform="translate(183.50,133.90) scale(1.000)"><path d="M19.9,2.25 H4.5 L3.5,15.3" fill="none" stroke="#73bf69" stroke-width="4.50" stroke-linejoin="miter"/><path d="M3.6,15.6 C5.6,13.6 8.2,12.7 11,12.7 C16,12.7 18.45,16.6 18.45,21.4 C18.45,26.5 15.4,29.25 10.7,29.25 C6.4,29.25 3.4,26.9 2.3,23.2" fill="none" stroke="#73bf69" stroke-width="4.50"/></g><g transform="translate(209.00,133.90) scale(1.000)"><polygon points="0,4.9 12.6,0 13.7,0 13.7,31.5 8.3,31.5 8.3,6.4 0,9.4" fill="#73bf69"/></g><g transform="translate(183.90,290.40) scale(1.000)"><polygon points="0,4.9 12.6,0 13.7,0 13.7,31.5 8.3,31.5 8.3,6.4 0,9.4" fill="#73bf69"/></g><g transform="translate(207.00,290.10) scale(1.000)"><path d="M2.25,10.6 C2.25,4.9 6,2.25 11.2,2.25 C16.4,2.25 19.9,5.4 19.9,9.9 C19.9,12.9 18.5,15 16.2,17.4 L3.6,28.6" fill="none" stroke="#73bf69" stroke-width="4.50"/><polygon points="0.6,27.0 22.0,27.0 22.0,31.5 0.6,31.5 0.6,29.5 3.5,26.2" fill="#73bf69"/></g><g transform="translate(182.30,486.50) scale(1.000)"><path d="M2.25,10.6 C2.25,4.9 6,2.25 11.2,2.25 C16.4,2.25 19.9,5.4 19.9,9.9 C19.9,12.9 18.5,15 16.2,17.4 L3.6,28.6" fill="none" stroke="#73bf69" stroke-width="4.50"/><polygon points="0.6,27.0 22.0,27.0 22.0,31.5 0.6,31.5 0.6,29.5 3.5,26.2" fill="#73bf69"/></g><g transform="translate(209.00,486.70) scale(1.000)"><polygon points="0,4.9 12.6,0 13.7,0 13.7,31.5 8.3,31.5 8.3,6.4 0,9.4" fill="#73bf69"/></g></svg><div style="position:absolute;left:0;top:0;width:1200px;height:1px;background:#1b1d21"></div>
<svg style="position:absolute;left:3px;top:3px" width="22" height="22" viewBox="0 0 22 22"><defs><linearGradient id="lg" x1="0" y1="0" x2="0" y2="1"><stop offset="0" stop-color="#f05a28"/><stop offset="1" stop-color="#fbca0a"/></linearGradient></defs><polygon fill="url(#lg)" stroke="url(#lg)" stroke-width="0.6" stroke-linejoin="round" points="11.70,3.20 13.85,5.08 16.71,5.02 17.16,7.85 19.38,9.65 17.90,12.09 18.45,14.90 15.75,15.83 14.37,18.33 11.70,17.30 9.03,18.33 7.65,15.83 4.95,14.90 5.50,12.09 4.02,9.65 6.24,7.85 6.69,5.02 9.55,5.08"/><polyline points="16.57,10.19 16.35,9.69 16.07,9.23 15.73,8.82 15.35,8.47 14.92,8.18 14.46,7.95 13.97,7.79 13.48,7.70 12.98,7.68 12.50,7.73 12.03,7.85 11.58,8.03 11.17,8.26 10.80,8.55 10.48,8.88 10.22,9.25 10.01,9.65 9.86,10.07 9.77,10.50 9.75,10.93 9.78,11.36 9.87,11.77 10.02,12.16 10.22,12.52 10.46,12.84 10.74,13.12 11.05,13.36 11.39,13.54 11.75,13.68 12.11,13.76 12.48,13.79 12.84,13.77 13.19,13.69 13.53,13.57 13.83,13.41 14.11,13.21 14.35,12.98 14.55,12.72 14.71,12.44 14.82,12.14 14.90,11.84 14.92,11.54 14.91,11.24 14.85,10.95 14.76,10.68 14.63,10.43 14.46,10.20 14.28,10.00 14.07,9.84 13.84,9.71 13.61,9.62 13.36,9.56 13.12,9.54 12.89,9.55 12.66,9.60 12.45,9.67 12.25,9.78 12.08,9.90 11.93,10.05 11.81,10.21" fill="none" stroke="#1a1310" stroke-width="1.45" stroke-linecap="round"/></svg>
<svg style="position:absolute;left:0;top:0" width="32" height="639" viewBox="0 0 32 639">
<circle cx="15" cy="60.6" r="4.1" fill="none" stroke="#b4b9c0" stroke-width="1" stroke-linecap="round" stroke-linejoin="round"/><path d="M18 63.7 L20.6 66.1" fill="none" stroke="#b4b9c0" stroke-width="1" stroke-linecap="round" stroke-linejoin="round"/>
<path d="M16 79 V87.2 M11.9 83.1 H20.1" fill="none" stroke="#b4b9c0" stroke-width="1" stroke-linecap="round" stroke-linejoin="round"/>
<rect x="11.3" y="101.2" width="3.8" height="3.8" rx="0.3" fill="none" stroke="#b4b9c0" stroke-width="1" stroke-linecap="round" stroke-linejoin="round"/>
<rect x="11.3" y="106.6" width="3.8" height="3.8" rx="0.3" fill="none" stroke="#b4b9c0" stroke-width="1" stroke-linecap="round" stroke-linejoin="round"/>
<rect x="16.7" y="101.2" width="3.8" height="3.8" rx="0.3" fill="none" stroke="#b4b9c0" stroke-width="1" stroke-linecap="round" stroke-linejoin="round"/>
<rect x="16.7" y="106.6" width="3.8" height="3.8" rx="0.3" fill="none" stroke="#b4b9c0" stroke-width="1" stroke-linecap="round" stroke-linejoin="round"/>
<circle cx="16.2" cy="128.4" r="4.9" fill="none" stroke="#b4b9c0" stroke-width="1" stroke-linecap="round" stroke-linejoin="round"/><path d="M13.8 130.8 L14.9 127.1 L18.6 126 L17.5 129.7 Z" fill="none" stroke="#b4b9c0" stroke-width="1" stroke-linecap="round" stroke-linejoin="round"/>
<path d="M12.8 154.2 H19.6 M13.6 154.2 V150.6 A2.6 2.6 0 0 1 18.8 150.6 V154.2 M15 156.3 H17.4" fill="none" stroke="#b4b9c0" stroke-width="1" stroke-linecap="round" stroke-linejoin="round"/><path d="M16.2 146.6 V147.6" fill="none" stroke="#b4b9c0" stroke-width="1" stroke-linecap="round" stroke-linejoin="round"/>
<polygon points="16.20,168.50 17.81,169.62 19.74,169.96 20.08,171.89 21.20,173.50 20.08,175.11 19.74,177.04 17.81,177.38 16.20,178.50 14.59,177.38 12.66,177.04 12.32,175.11 11.20,173.50 12.32,171.89 12.66,169.96 14.59,169.62" fill="none" stroke="#b4b9c0" stroke-width="1" stroke-linecap="round" stroke-linejoin="round"/><circle cx="16.2" cy="173.5" r="1.7" fill="none" stroke="#b4b9c0" stroke-width="1" stroke-linecap="round" stroke-linejoin="round"/>
<path d="M16.2 191.4 L20.3 193 V196.5 C20.3 199 18.5 200.5 16.2 201.4 C13.9 200.5 12.1 199 12.1 196.5 V193 Z" fill="none" stroke="#b4b9c0" stroke-width="1" stroke-linecap="round" stroke-linejoin="round"/>
<circle cx="16.2" cy="622.3" r="5.1" fill="none" stroke="#b4b9c0" stroke-width="1.15" stroke-linecap="round" stroke-linejoin="round"/>
<path d="M14.7 620.9 A1.5 1.5 0 1 1 16.4 622.4 V623.2" fill="none" stroke="#b4b9c0" stroke-width="1" stroke-linecap="round" stroke-linejoin="round"/><circle cx="16.3" cy="624.8" r="0.5" fill="#b4b9c0"/>
</svg>
<svg style="position:absolute;left:9px;top:593.2px" width="14.2" height="14.2" viewBox="0 0 14.2 14.2"><clipPath id="av"><circle cx="7.05" cy="7.1" r="7.05"/></clipPath><g clip-path="url(#av)"><rect width="15" height="15" fill="#477311"/><rect x="4.1" y="1.7" width="1.6" height="5.6" fill="#f28b82"/><rect x="9.0" y="1.7" width="1.5" height="5.6" fill="#f28b82"/><rect x="4.1" y="2.9" width="6.4" height="2.2" fill="#f28b82"/><rect x="1.1" y="7.3" width="4.0" height="5.2" fill="#f28b82"/><rect x="9.2" y="7.3" width="4.0" height="5.2" fill="#f28b82"/><rect x="5.7" y="8.9" width="3.0" height="1.6" fill="#f28b82"/><rect x="5.6" y="11.8" width="2.9" height="1.8" fill="#f28b82"/><rect x="1.5" y="1.6" width="1.4" height="1.4" fill="#f28b82"/><rect x="11.2" y="1.6" width="1.4" height="1.4" fill="#f28b82"/><rect x="4.8" y="12.4" width="1.2" height="1.2" fill="#f28b82"/><rect x="8.3" y="12.4" width="1.2" height="1.2" fill="#f28b82"/></g></svg>
<svg style="position:absolute;left:39px;top:9px" width="10" height="11" viewBox="0 0 10 11">
<rect x="1.3" y="1.8" width="3.2" height="3.2" rx="0.25" fill="none" stroke="#b4b9c0" stroke-width="0.9" stroke-linecap="round" stroke-linejoin="round"/>
<rect x="1.3" y="5.9" width="3.2" height="3.2" rx="0.25" fill="none" stroke="#b4b9c0" stroke-width="0.9" stroke-linecap="round" stroke-linejoin="round"/>
<rect x="5.4" y="1.8" width="3.2" height="3.2" rx="0.25" fill="none" stroke="#b4b9c0" stroke-width="0.9" stroke-linecap="round" stroke-linejoin="round"/>
<rect x="5.4" y="5.9" width="3.2" height="3.2" rx="0.25" fill="none" stroke="#b4b9c0" stroke-width="0.9" stroke-linecap="round" stroke-linejoin="round"/>
</svg>
<div style="position:absolute;left:53px;top:8px;font-size:9.4px;line-height:12px;color:#d8d9da;white-space:nowrap">Mqtt Consumer</div>
<svg style="position:absolute;left:0;top:0" width="160" height="30" viewBox="0 0 160 30"><polygon points="128.80,10.60 129.92,13.26 132.79,13.50 130.61,15.39 131.27,18.20 128.80,16.70 126.33,18.20 126.99,15.39 124.81,13.50 127.68,13.26" fill="none" stroke="#b4b9c0" stroke-width="1" stroke-linecap="round" stroke-linejoin="round"/>
<circle cx="146.8" cy="11.6" r="1.3" fill="none" stroke="#b4b9c0" stroke-width="1" stroke-linecap="round" stroke-linejoin="round"/><circle cx="146.8" cy="17.6" r="1.3" fill="none" stroke="#b4b9c0" stroke-width="1" stroke-linecap="round" stroke-linejoin="round"/><circle cx="141.6" cy="14.6" r="1.3" fill="none" stroke="#b4b9c0" stroke-width="1" stroke-linecap="round" stroke-linejoin="round"/><path d="M142.8 14 L145.6 12.3 M142.8 15.2 L145.6 16.9" fill="none" stroke="#b4b9c0" stroke-width="1" stroke-linecap="round" stroke-linejoin="round"/></svg>
<div class="btn" style="left:957.5px;width:21.7px"></div>
<div class="btn" style="left:981.3px;width:18.5px"></div>
<div class="btn" style="left:1002.1px;width:18.7px"></div>
<div class="btn" style="left:1027.3px;width:19.5px"></div>
<div class="btn" style="left:1053.5px;width:69.3px"></div>
<div class="btn" style="left:1124.8px;width:18.8px"></div>
<div class="btn" style="left:1145.4px;width:46.9px"></div>
<div style="position:absolute;left:1163.6px;top:6px;width:0.8px;height:16.8px;background:#0b0c0e"></div>
<svg style="position:absolute;left:950px;top:0" width="250" height="30" viewBox="950 0 250 30">
<rect x="962.3" y="13.9" width="1.6" height="3.8" fill="#b4b9c0"/>
<rect x="964.6" y="12.4" width="1.6" height="5.3" fill="#b4b9c0"/>
<rect x="966.9" y="13.5" width="1.6" height="4.2" fill="#b4b9c0"/>
<rect x="969.2" y="11.2" width="1.6" height="6.5" fill="#b4b9c0"/>
<path d="M972.6 11.8 Q973 14 975.2 14.5 Q973 15 972.6 17.2 Q972.2 15 970 14.5 Q972.2 14 972.6 11.8 Z" fill="#f7b500" stroke="#f7b500" stroke-width="0.6"/>
<path d="M987.3 10.6 H992.3 L994.3 12.6 V17.4 A0.6 0.6 0 0 1 993.7 18 H987.9 A0.6 0.6 0 0 1 987.3 17.4 Z M988.9 10.6 V12.8 H991.5 V10.6 M988.9 18 V15.8 A1.6 1.6 0 0 1 992.1 15.8 V18" fill="none" stroke="#b4b9c0" stroke-width="0.85" stroke-linecap="round" stroke-linejoin="round"/>
<polygon points="1011.20,10.00 1012.54,10.97 1014.17,11.23 1014.43,12.86 1015.40,14.20 1014.43,15.54 1014.17,17.17 1012.54,17.43 1011.20,18.40 1009.86,17.43 1008.23,17.17 1007.97,15.54 1007.00,14.20 1007.97,12.86 1008.23,11.23 1009.86,10.97" fill="none" stroke="#b4b9c0" stroke-width="0.85" stroke-linecap="round" stroke-linejoin="round"/><circle cx="1011.2" cy="14.2" r="1.4" fill="none" stroke="#b4b9c0" stroke-width="0.85" stroke-linecap="round" stroke-linejoin="round"/>
<path d="M1033.5 10.2 H1040.5 A0.6 0.6 0 0 1 1041.1 10.8 V15.6 A0.6 0.6 0 0 1 1040.5 16.2 H1033.5 A0.6 0.6 0 0 1 1032.9 15.6 V10.8 A0.6 0.6 0 0 1 1033.5 10.2 Z M1033 14.5 H1041 M1035.5 16.4 V18 H1038.5 V16.4" fill="none" stroke="#b4b9c0" stroke-width="0.85" stroke-linecap="round" stroke-linejoin="round"/>
<circle cx="1062.3" cy="14.2" r="4.1" fill="none" stroke="#b4b9c0" stroke-width="0.85" stroke-linecap="round" stroke-linejoin="round"/><path d="M1062.3 11.8 V14.3 L1061.2 15.4" fill="none" stroke="#b4b9c0" stroke-width="0.85" stroke-linecap="round" stroke-linejoin="round"/>
<path d="M1114.2 13.2 L1115.8 14.8 L1117.4 13.2" fill="none" stroke="#b4b9c0" stroke-width="0.85" stroke-linecap="round" stroke-linejoin="round"/>
<circle cx="1133.6" cy="13.8" r="3.8" fill="none" stroke="#b4b9c0" stroke-width="0.85" stroke-linecap="round" stroke-linejoin="round"/><path d="M1136.4 16.6 L1138.2 18.4 M1131.9 13.8 H1135.3" fill="none" stroke="#b4b9c0" stroke-width="0.85" stroke-linecap="round" stroke-linejoin="round"/>
<path d="M1150.6 13 A3.9 3.9 0 0 1 1157.9 12 M1158.2 15.6 A3.9 3.9 0 0 1 1150.9 16.5 M1157.9 10 V12.3 H1155.6 M1150.9 18.5 V16.2 H1153.2" fill="none" stroke="#b4b9c0" stroke-width="0.85" stroke-linecap="round" stroke-linejoin="round"/>
<path d="M1181.6 13.6 L1183.1 15.1 L1184.6 13.6" fill="none" stroke="#b4b9c0" stroke-width="0.85" stroke-linecap="round" stroke-linejoin="round"/>
</svg>
<div style="position:absolute;left:1069.6px;top:8.5px;font-size:7.5px;line-height:11px;color:#c7d0d9;-webkit-text-stroke:0.2px #c7d0d9;white-space:nowrap">Last 1 hour</div>
<div style="position:absolute;left:1167px;top:8.5px;font-size:7.7px;line-height:11px;color:#eb7b18;font-weight:bold;white-space:nowrap">10s</div>
<div style="position:absolute;left:1195.8px;top:30.5px;width:4.2px;height:527px;background:#3b3d48;border-radius:2px"></div></body></html>
